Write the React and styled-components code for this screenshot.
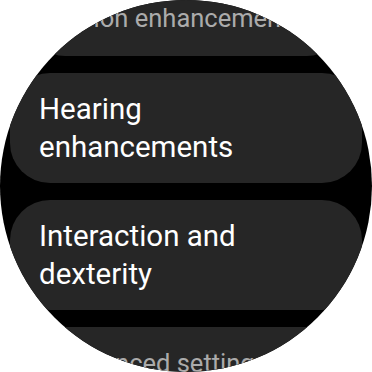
import styled, { createGlobalStyle } from "styled-components";

const Global = createGlobalStyle`
    html, body {
        margin: 0;
        padding: 0;
        background: #ffffff;
    }
    body {
        font-family: Roboto, "Noto Sans", sans-serif;
    }
`;

/// the round watch face, everything outside the circle is cut off
const Watch = styled.div`
    width: 372px;
    height: 372px;
    border-radius: 50%;
    background: #000000;
    overflow: hidden;
`;

/// the list is scrolled a bit, so it starts above the top edge
const List = styled.div`
    display: flex;
    flex-direction: column;
    gap: 17px;
    margin-top: ${(p) => p.$offset}px;
`;

const Chip = styled.div`
    display: flex;
    align-items: ${(p) => (p.$edge === "top" ? "flex-end" : p.$edge === "bottom" ? "flex-start" : "center")};
    box-sizing: border-box;
    height: ${(p) => (p.$edge ? 90 : 110)}px;
    margin: 0 ${(p) => (p.$edge ? 32 : 10)}px;
    padding: ${(p) =>
        p.$edge === "top" ? "0 0 23px 26px" : p.$edge === "bottom" ? "21px 0 0 26px" : "0 0 0 29px"};
    border-radius: ${(p) => (p.$edge ? 33 : 40)}px;
    background: #262626;
`;

const Label = styled.span`
    font-size: ${(p) => (p.$dim ? 25.5 : 29.5)}px;
    line-height: ${(p) => (p.$dim ? 30 : 38)}px;
    color: ${(p) => (p.$dim ? "#ababab" : "#ffffff")};
    white-space: pre-line;
`;

const items = [
    { label: "Vision enhancements", edge: "top" },
    { label: "Hearing\nenhancements" },
    { label: "Interaction and\ndexterity" },
    { label: "Advanced settings", edge: "bottom" },
];

const App = () => {
    return (
        <>
            <Global />
            <Watch>
                <List $offset={-34}>
                    {items.map((item) => (
                        <Chip key={item.label} $edge={item.edge}>
                            <Label $dim={!!item.edge}>{item.label}</Label>
                        </Chip>
                    ))}
                </List>
            </Watch>
        </>
    );
};

export default App;
